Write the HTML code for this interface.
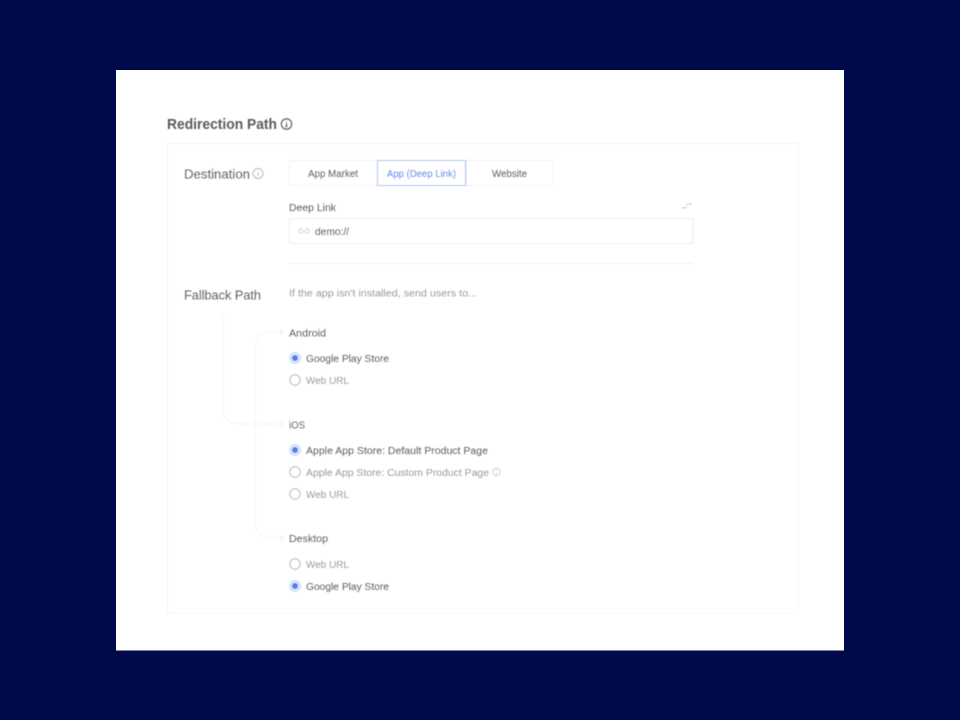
<!DOCTYPE html>
<html>
<head>
<meta charset="utf-8">
<style>
html,body{margin:0;padding:0;width:960px;height:720px;overflow:hidden;background:#000a4b}
svg{position:absolute;left:0;top:0;display:block}
text{font-family:"Liberation Sans",sans-serif}
.d{fill:#5c5c5c;stroke:#5c5c5c;stroke-width:.18}
.l{fill:#9c9c9c;stroke:#9c9c9c;stroke-width:.12}
</style>
</head>
<body>
<svg width="960" height="720" viewBox="0 0 960 720" xmlns="http://www.w3.org/2000/svg">
<defs><filter id="b" x="0" y="0" width="100%" height="100%"><feGaussianBlur stdDeviation="0.45"/></filter></defs>
<rect x="0" y="0" width="960" height="720" fill="#000a4b"/>
<rect x="116" y="70" width="728" height="580.500" fill="#fff"/>
<g filter="url(#b)">
<rect x="167.500" y="143.500" width="631" height="470" rx="3" fill="#fff" stroke="#f1f2f4"/>

<text x="167" y="129" font-size="14.500" font-weight="700" fill="#5a5a5a" textLength="110" lengthAdjust="spacingAndGlyphs">Redirection Path</text>
<circle cx="286.500" cy="124" r="5.200" fill="none" stroke="#555" stroke-width="1.100"/>
<path d="M286.500 123v3.600M285.400 126.600h2.200M286.500 121v.8" stroke="#555" stroke-width="1" fill="none"/>

<text x="184" y="178.500" font-size="13" class="d" textLength="66" lengthAdjust="spacingAndGlyphs">Destination</text>
<circle cx="258" cy="173.500" r="5" fill="none" stroke="#b4b4b4" stroke-width="1"/>
<path d="M258 172.500v3.500M258 170.800v.8" stroke="#b4b4b4" stroke-width="1" fill="none"/>

<rect x="289.500" y="160.500" width="264" height="25" rx="2" fill="#fff" stroke="#f0f1f3"/>
<line x1="466.500" y1="161" x2="466.500" y2="185" stroke="#f0f1f3"/>
<rect x="377.500" y="160.500" width="88" height="25" fill="#fff" stroke="#9dbaf1" stroke-width=".9"/>
<text x="308" y="177" font-size="10.500" class="d" textLength="50" lengthAdjust="spacingAndGlyphs">App Market</text>
<text x="387" y="177" font-size="10.500" fill="#5488ea" stroke="#5488ea" stroke-width=".12" textLength="69" lengthAdjust="spacingAndGlyphs">App (Deep Link)</text>
<text x="492" y="177" font-size="10.500" class="d" textLength="35" lengthAdjust="spacingAndGlyphs">Website</text>

<text x="289" y="211" font-size="10.500" class="d" textLength="47" lengthAdjust="spacingAndGlyphs">Deep Link</text>
<path d="M686 204.500h5.500M689.500 203l2 1.500M682 207.500h5.500M682 207.500l2 1.500" stroke="#c4c4c4" stroke-width=".8" fill="none"/>

<rect x="289.500" y="218.500" width="403.500" height="25" rx="1.500" fill="#fff" stroke="#eceef0"/>
<path d="M303 229h-2a2 2 0 0 0 0 4h2M305 229h2a2 2 0 0 1 0 4h-2M302.500 231h3" stroke="#c8c8c8" stroke-width=".9" fill="none"/>
<text x="315" y="235" font-size="10.500" class="d" textLength="34" lengthAdjust="spacingAndGlyphs">demo://</text>
<line x1="289" y1="263.500" x2="693" y2="263.500" stroke="#eceef0"/>

<text x="184" y="299.500" font-size="12.500" class="d" textLength="77" lengthAdjust="spacingAndGlyphs">Fallback Path</text>
<text x="289" y="296.500" font-size="10.500" class="l" textLength="188" lengthAdjust="spacingAndGlyphs">If the app isn't installed, send users to...</text>

<path d="M223 316V409a15 15 0 0 0 15 15H279" fill="none" stroke="#f4f5f6"/>
<path d="M279 332H270a15 15 0 0 0 -15 15V523a15 15 0 0 0 15 15H279" fill="none" stroke="#f4f5f6"/>
<path d="M280 329.500l3 2.500-3 2.500M280 421.500l3 2.500-3 2.500M280 535.500l3 2.500-3 2.500" fill="none" stroke="#e6e6e8" stroke-width=".9"/>

<text x="289" y="336.500" font-size="10.500" class="d" textLength="37" lengthAdjust="spacingAndGlyphs">Android</text>
<circle cx="295" cy="358" r="5.500" fill="#dfe9fb" stroke="#c6d8f7" stroke-width=".8"/><circle cx="295" cy="358" r="3" fill="#4a80ea"/>
<text x="306" y="362" font-size="10.500" class="d" textLength="83" lengthAdjust="spacingAndGlyphs">Google Play Store</text>
<circle cx="295" cy="380" r="5.200" fill="#fff" stroke="#b4b4b4"/>
<text x="306" y="384" font-size="10.500" class="l" textLength="43" lengthAdjust="spacingAndGlyphs">Web URL</text>

<text x="289" y="428.500" font-size="10.500" class="d" textLength="16" lengthAdjust="spacingAndGlyphs">iOS</text>
<circle cx="295" cy="450" r="5.500" fill="#dfe9fb" stroke="#c6d8f7" stroke-width=".8"/><circle cx="295" cy="450" r="3" fill="#4a80ea"/>
<text x="306" y="454" font-size="10.500" class="d" textLength="182" lengthAdjust="spacingAndGlyphs">Apple App Store: Default Product Page</text>
<circle cx="295" cy="472" r="5.200" fill="#fff" stroke="#b4b4b4"/>
<text x="306" y="476" font-size="10.500" class="l" textLength="183" lengthAdjust="spacingAndGlyphs">Apple App Store: Custom Product Page</text>
<circle cx="496.500" cy="472" r="3.800" fill="none" stroke="#c0c0c0" stroke-width=".8"/>
<path d="M496.500 471.500v2.500M496.500 469.800v.7" stroke="#c0c0c0" stroke-width=".8" fill="none"/>
<circle cx="295" cy="494" r="5.200" fill="#fff" stroke="#b4b4b4"/>
<text x="306" y="498" font-size="10.500" class="l" textLength="43" lengthAdjust="spacingAndGlyphs">Web URL</text>

<text x="289" y="542" font-size="10.500" class="d" textLength="39" lengthAdjust="spacingAndGlyphs">Desktop</text>
<circle cx="295" cy="564" r="5.200" fill="#fff" stroke="#b4b4b4"/>
<text x="306" y="568" font-size="10.500" class="l" textLength="43" lengthAdjust="spacingAndGlyphs">Web URL</text>
<circle cx="295" cy="586" r="5.500" fill="#dfe9fb" stroke="#c6d8f7" stroke-width=".8"/><circle cx="295" cy="586" r="3" fill="#4a80ea"/>
<text x="306" y="590" font-size="10.500" class="d" textLength="83" lengthAdjust="spacingAndGlyphs">Google Play Store</text>
</g>
</svg>
</body>
</html>
